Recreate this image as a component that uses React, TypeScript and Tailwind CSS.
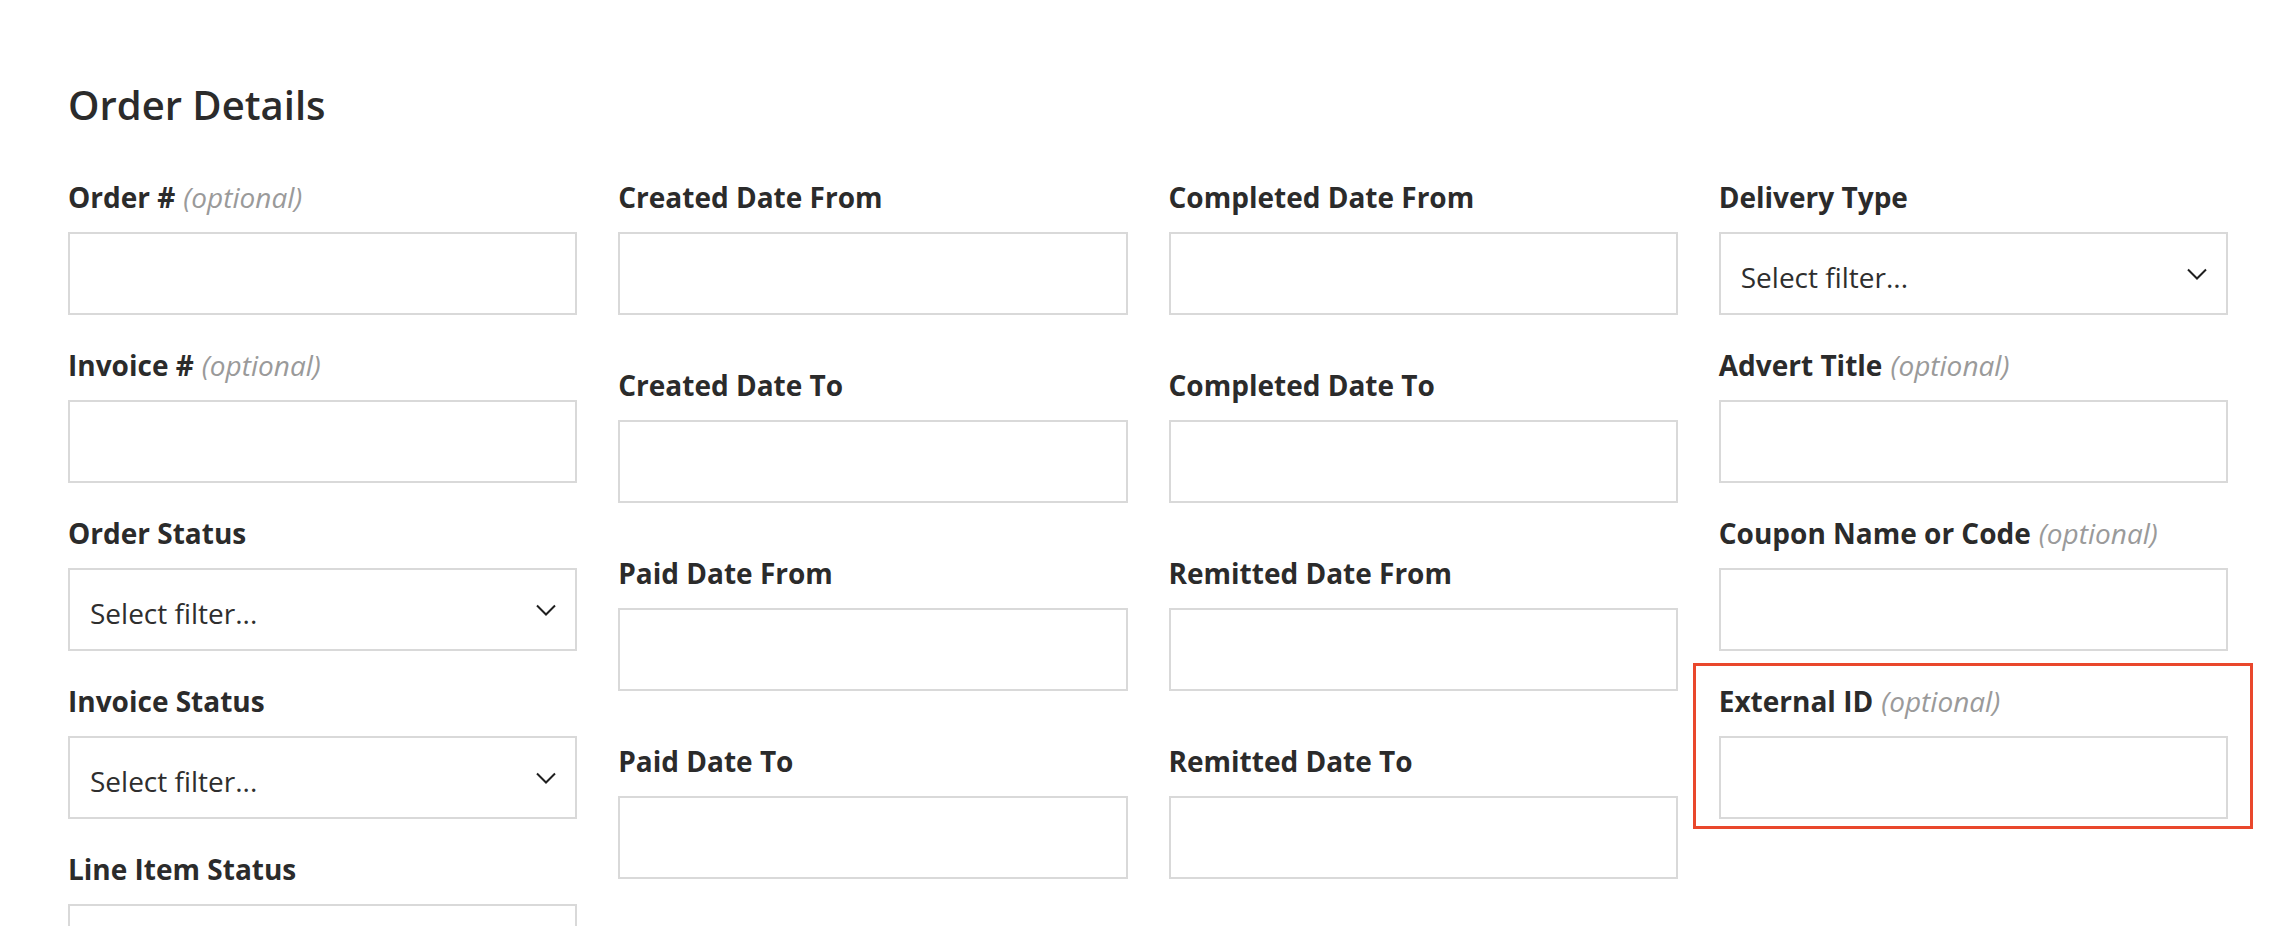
import React from 'react'

type FieldProps = {
    label: string
    optional?: boolean
    select?: boolean
    tall?: boolean
    highlight?: boolean
}

function Chevron() {
    return (
        <svg width="20" height="12" viewBox="0 0 20 12" fill="none" stroke="#1f1f1f" strokeWidth={2}>
            <polyline points="1,1.5 10,10.5 19,1.5" />
        </svg>
    )
}

function Field({ label, optional, select, tall, highlight }: FieldProps) {
    return (
        <div className={`relative ${tall ? 'mb-[52px]' : 'mb-[32px]'}`}>
            {/* annotation box */}
            {highlight && (
                <div className="pointer-events-none absolute -top-[20px] -bottom-[10px] -left-[26px] -right-[25px] border-[3px] border-[#e9472c]" />
            )}
            <label className="block h-[36px] leading-[36px] mb-[17px] text-[28px] font-bold text-[#2b2b2b] whitespace-nowrap">
                {label}
                {optional && <span className="ml-[8px] font-normal italic text-[#9a9a9a]">(optional)</span>}
            </label>
            {select ? (
                <div className="flex h-[83px] items-center justify-between border-2 border-[#d9d9d9] bg-white pl-[20px] pr-[19px]">
                    <span className="pt-[6px] text-[28px] text-[#2e2e2e]">Select filter...</span>
                    <Chevron />
                </div>
            ) : (
                <input type="text" className="block h-[83px] w-full border-2 border-[#d9d9d9] bg-white outline-none" />
            )}
        </div>
    )
}

export default function App() {
    return (
        <div className="min-h-screen bg-white pl-[68px] pt-[78px] font-['Open_Sans',sans-serif]">
            <h2 className="mb-[47px] text-[40px] font-semibold leading-[54px] text-[#2b2b2b]">Order Details</h2>

            <div className="grid w-[2160px] grid-cols-4 gap-x-[41px]">
                <div className="flex flex-col">
                    <Field label="Order #" optional />
                    <Field label="Invoice #" optional />
                    <Field label="Order Status" select />
                    <Field label="Invoice Status" select />
                    <Field label="Line Item Status" />
                </div>

                <div className="flex flex-col">
                    <Field label="Created Date From" tall />
                    <Field label="Created Date To" tall />
                    <Field label="Paid Date From" tall />
                    <Field label="Paid Date To" tall />
                </div>

                <div className="flex flex-col">
                    <Field label="Completed Date From" tall />
                    <Field label="Completed Date To" tall />
                    <Field label="Remitted Date From" tall />
                    <Field label="Remitted Date To" tall />
                </div>

                <div className="flex flex-col">
                    <Field label="Delivery Type" select />
                    <Field label="Advert Title" optional />
                    <Field label="Coupon Name or Code" optional />
                    <Field label="External ID" optional highlight />
                </div>
            </div>
        </div>
    )
}
